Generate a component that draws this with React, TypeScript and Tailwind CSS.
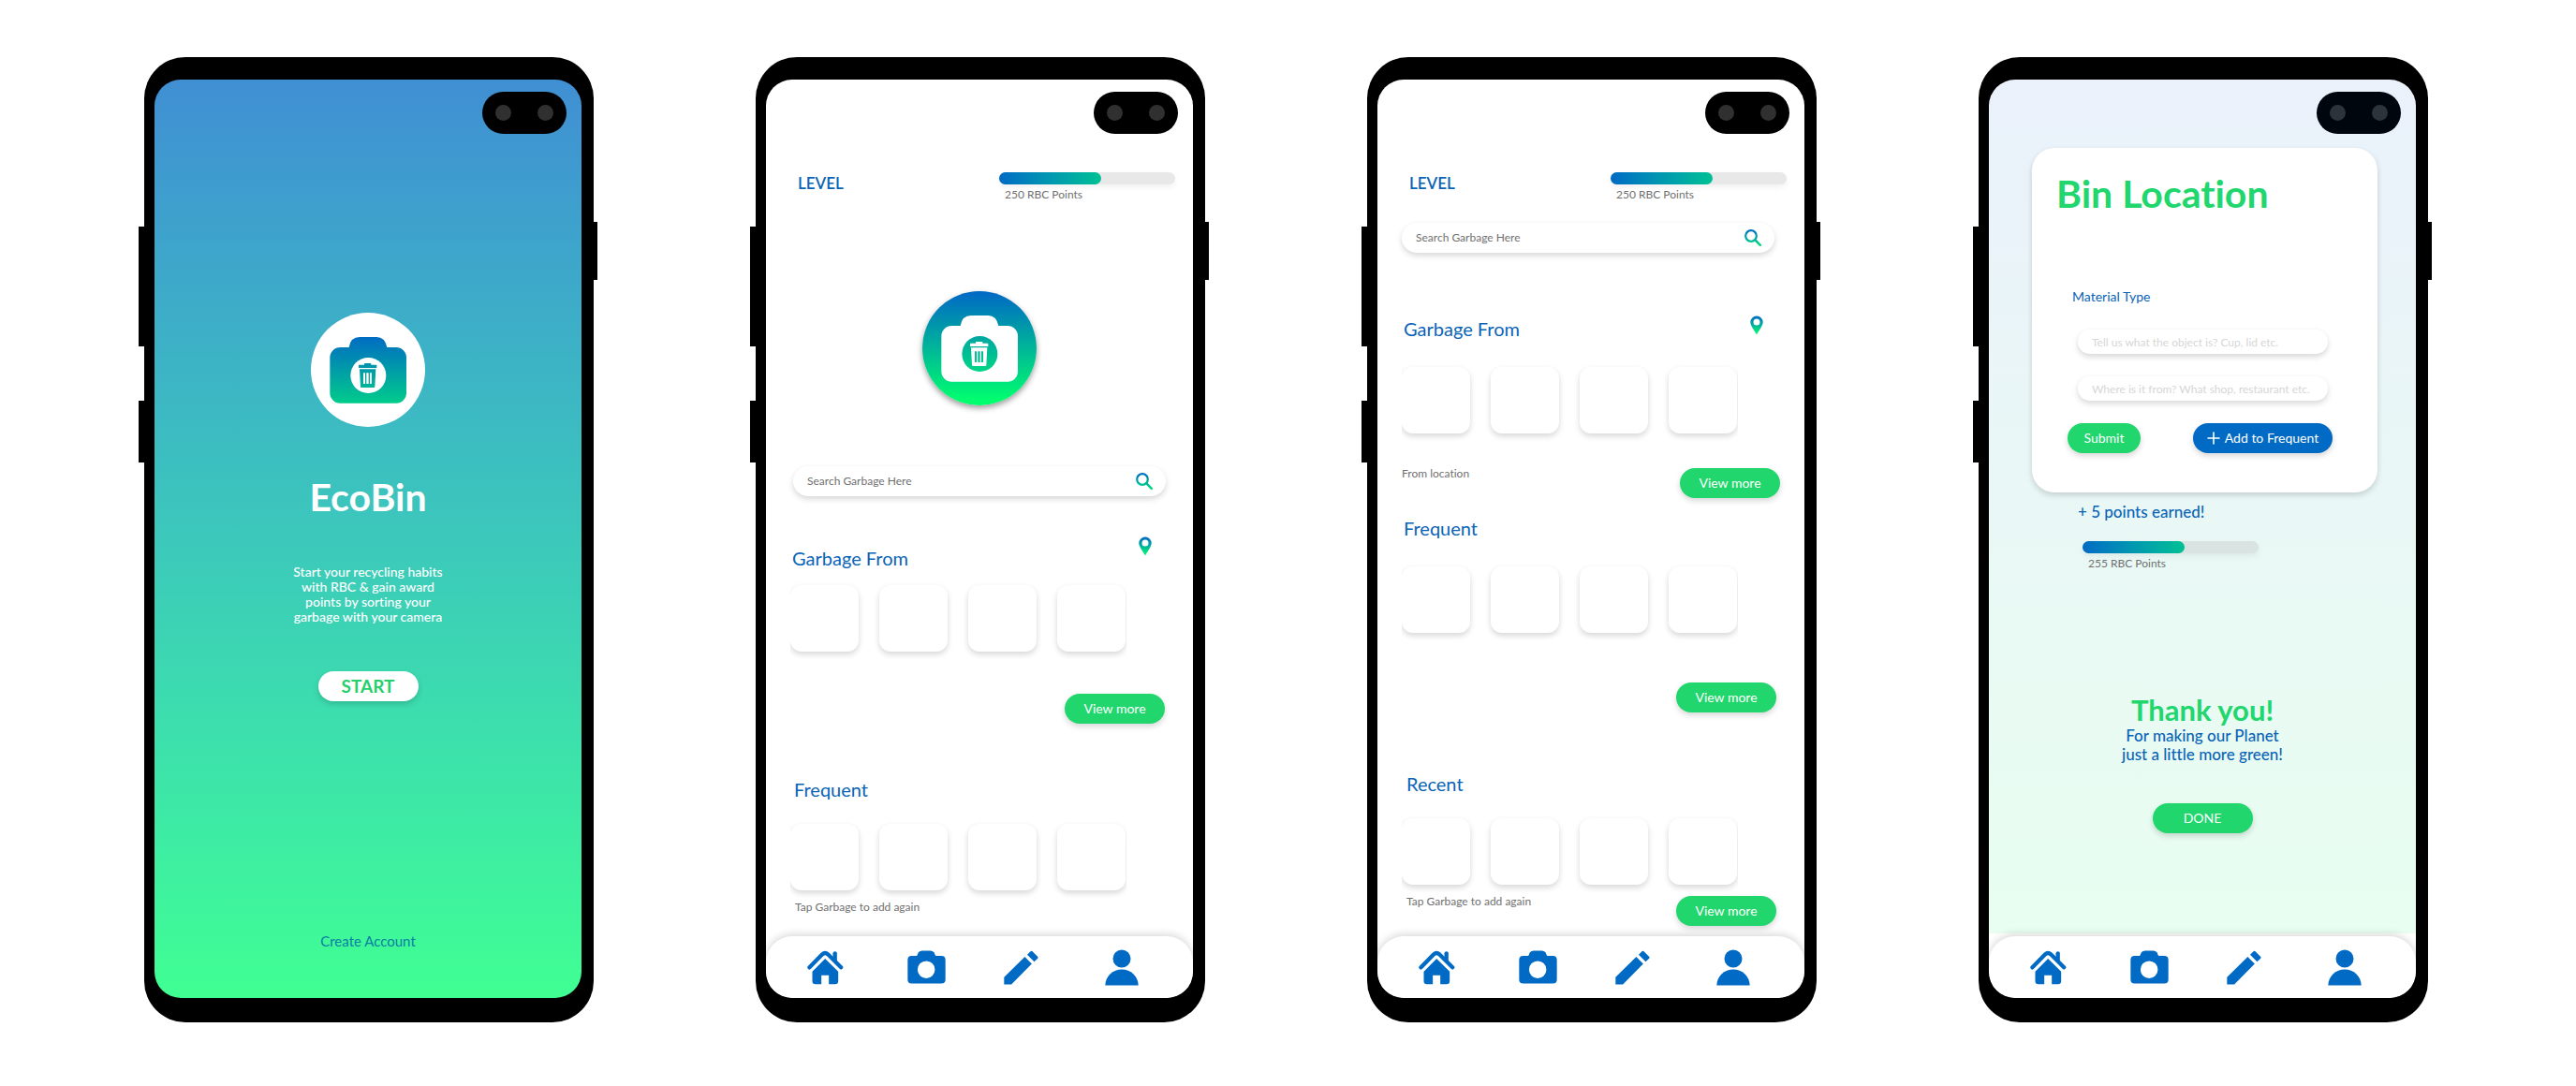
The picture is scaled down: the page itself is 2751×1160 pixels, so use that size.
import { useId } from "react";
import type { ReactNode } from "react";

const PILL_SHADOW = "shadow-[0_3px_6px_rgba(0,0,0,0.16)]";

/* ---------- Icons ---------- */

function BlueGreen({ id, y1, y2 }: { id: string; y1: number; y2: number }) {
  return (
    <defs>
      <linearGradient id={id} gradientUnits="userSpaceOnUse" x1="0" y1={y1} x2="0" y2={y2}>
        <stop offset="0" stopColor="#006ac4" />
        <stop offset="1" stopColor="#00ff6e" />
      </linearGradient>
    </defs>
  );
}

function CameraBinLogo({ inverted = false }: { inverted?: boolean }) {
  const id = useId();
  const fill = `url(#${id})`;
  const back = inverted ? fill : "#ffffff";
  const front = inverted ? "#ffffff" : fill;
  return (
    <svg viewBox="36 42 366 366" className="block size-[122px]" aria-hidden="true">
      <BlueGreen id={id} y1={inverted ? 48 : 115} y2={inverted ? 395 : 445} />
      <circle cx="219" cy="225" r="183" fill={back} />
      <path
        d="M130 153H158Q163 120 192 120H247Q273 120 280 153H309A33 33 0 0 1 342 186V299A33 33 0 0 1 309 332H130A33 33 0 0 1 97 299V186A33 33 0 0 1 130 153Z"
        fill={front}
      />
      <circle cx="220" cy="243" r="57" fill={back} />
      <path d="M207 209V206Q207 204 209 204H227Q229 204 229 206V209H245Q247 209 247 211V219H189V211Q189 209 191 209Z" fill={front} />
      <path
        fillRule="evenodd"
        d="M192 223H244L241 279Q241 282 238 282H198Q195 282 195 279ZM204 235V270H210V235ZM214 235V270H221V235ZM225 235V270H231V235Z"
        fill={front}
      />
    </svg>
  );
}

function SearchIcon() {
  const id = useId();
  return (
    <svg viewBox="0 0 18 18" className="block size-[18px]" fill="none" aria-hidden="true">
      <BlueGreen id={id} y1={0} y2={22} />
      <circle cx="7" cy="7" r="5.8" stroke={`url(#${id})`} strokeWidth="2.2" />
      <path d="M11.2 11.2L16.8 16.8" stroke={`url(#${id})`} strokeWidth="2.6" strokeLinecap="round" />
    </svg>
  );
}

function PinIcon() {
  const id = useId();
  return (
    <svg viewBox="0 0 14 21" className="block h-[21px] w-3.5" aria-hidden="true">
      <BlueGreen id={id} y1={1} y2={20} />
      <path
        fillRule="evenodd"
        d="M7 0.5A6.7 6.7 0 0 1 13.7 7.2C13.7 11 9 16.5 7 20.5C5 16.5 0.3 11 0.3 7.2A6.7 6.7 0 0 1 7 0.5ZM7 3.6A3.5 3.5 0 1 0 7 10.6A3.5 3.5 0 1 0 7 3.6Z"
        fill={`url(#${id})`}
      />
    </svg>
  );
}

function HomeIcon() {
  return (
    <svg viewBox="36 76 116 114" className="block h-[38px] w-[39px]" fill="currentColor" aria-hidden="true">
      <path d="M43 134L84 92Q93 84 102 92L144 134" fill="none" stroke="currentColor" strokeWidth="13" strokeLinecap="round" />
      <path d="M93 106L135 147V178Q135 188 125 188H105V159H81V188H62Q52 188 52 178V147Z" />
      <path d="M118 89Q118 83 125 83Q131 83 131 89V116L118 103Z" />
    </svg>
  );
}

function CameraIcon() {
  return (
    <svg viewBox="357 76 124 108" className="block h-9 w-[41px]" fill="currentColor" aria-hidden="true">
      <path
        fillRule="evenodd"
        d="M371 94H385Q389 94 390 89Q393 77 404 77H432Q443 77 446 89Q447 94 451 94H467Q480 94 480 107V170Q480 183 467 183H371Q358 183 358 170V107Q358 94 371 94ZM418 110A28 28 0 1 0 418 166A28 28 0 1 0 418 110Z"
      />
    </svg>
  );
}

function PencilIcon() {
  return (
    <svg viewBox="36 73 114 113" className="block size-[37px]" fill="currentColor" aria-hidden="true">
      <path d="M37 161L105 94L128 117L61 185H37Z" />
      <path d="M113 87L123 77Q127 73 131 77L147 93Q151 97 146 101L136 110Z" />
    </svg>
  );
}

function PersonIcon() {
  return (
    <svg viewBox="359 71 110 118" className="block h-[39px] w-9" fill="currentColor" aria-hidden="true">
      <circle cx="414" cy="101" r="29" />
      <path d="M360 188A54 52 0 0 1 468 188Z" />
    </svg>
  );
}

/* ---------- Phone shell ---------- */

function Phone({
  screen,
  pill = "bg-black",
  lens = "bg-[#303030]",
  children,
}: {
  screen: string;
  pill?: string;
  lens?: string;
  children: ReactNode;
}) {
  return (
    <section className="relative w-[480px] shrink-0 rounded-[44px] bg-black pt-6 pr-[13px] pb-[26px] pl-[11px]">
      <span className="absolute top-[181px] -left-1.5 h-32 w-3 bg-black" />
      <span className="absolute top-[367px] -left-1.5 h-[66px] w-3 bg-black" />
      <span className="absolute top-44 -right-1 h-[62px] w-3 bg-black" />
      <div className={`relative flex min-h-[981px] flex-col overflow-hidden rounded-[28px] ${screen}`}>
        <div className={`absolute top-[13px] right-4 flex h-[45px] w-[90px] items-center justify-between rounded-full px-3.5 ${pill}`}>
          <span className={`size-[17px] rounded-full ${lens}`} />
          <span className={`size-[17px] rounded-full ${lens}`} />
        </div>
        {children}
      </div>
    </section>
  );
}

function NavBar() {
  return (
    <nav className="mt-auto flex h-[66px] items-center rounded-[28px] bg-white pl-11 text-[#006ac4] shadow-[0_-2px_8px_rgba(0,0,0,0.16)]">
      <button type="button" aria-label="Home">
        <HomeIcon />
      </button>
      <button type="button" aria-label="Camera" className="ml-[68px]">
        <CameraIcon />
      </button>
      <button type="button" aria-label="Edit" className="ml-[62px]">
        <PencilIcon />
      </button>
      <button type="button" aria-label="Profile" className="ml-[71px]">
        <PersonIcon />
      </button>
    </nav>
  );
}

/* ---------- Shared pieces ---------- */

function Points({ label, track = "bg-[#e8e8e8]" }: { label: string; track?: string }) {
  return (
    <div className="w-[188px]">
      <div
        role="progressbar"
        aria-label={label}
        aria-valuenow={58}
        aria-valuemin={0}
        aria-valuemax={100}
        className={`h-[13px] rounded-full shadow-[0_3px_6px_rgba(0,0,0,0.06)] ${track}`}
      >
        <div className="h-full w-[58%] rounded-full bg-linear-to-r from-[#006ac4] to-[#00c093]" />
      </div>
      <p className="mt-[3px] pl-1.5 text-xs text-[#707070]">{label}</p>
    </div>
  );
}

function Header() {
  return (
    <header className="flex items-start justify-between pt-[99px] pr-[19px] pl-[34px]">
      <h2 className="text-[17px] leading-6 font-semibold text-[#0a64b6]">LEVEL</h2>
      <Points label="250 RBC Points" />
    </header>
  );
}

function Search() {
  return (
    <label className={`flex h-8 w-[398px] items-center rounded-full bg-white pr-3.5 pl-[15px] ${PILL_SHADOW}`}>
      <input
        type="search"
        aria-label="Search garbage"
        placeholder="Search Garbage Here"
        className="min-w-0 flex-1 bg-transparent text-xs text-[#707070] outline-none placeholder:text-[#707070]"
      />
      <SearchIcon />
    </label>
  );
}

function Heading({ children }: { children: ReactNode }) {
  return <h3 className="text-xl leading-7 text-[#0a64b6]">{children}</h3>;
}

function Cards() {
  return (
    <ul className="ml-[26px] flex w-[359px] gap-[22px] overflow-x-clip">
      {[0, 1, 2, 3].map((n) => (
        <li key={n} className={`h-[71px] w-[73px] shrink-0 rounded-xl bg-white ${PILL_SHADOW}`} />
      ))}
    </ul>
  );
}

function PillButton({ children, className }: { children: ReactNode; className: string }) {
  return (
    <button type="button" className={`flex h-8 items-center justify-center rounded-full text-sm ${PILL_SHADOW} ${className}`}>
      {children}
    </button>
  );
}

function ViewMore() {
  return <PillButton className="w-[107px] bg-[#20d66d] text-white">View more</PillButton>;
}

/* ---------- Screens ---------- */

function WelcomeScreen() {
  return (
    <Phone screen="items-center bg-linear-to-b from-[#408fd3] to-[#40ff92]">
      <div className="mt-[249px]">
        <CameraBinLogo />
      </div>
      <h1 className="mt-[51px] text-[41px] leading-[48px] font-bold text-white">EcoBin</h1>
      <p className="mt-12 w-44 text-center text-sm leading-4 font-medium text-white">
        Start your recycling habits with RBC &amp; gain award points by sorting your garbage with your camera
      </p>
      <PillButton className="mt-[50px] w-[107px] bg-white text-[#25cf6c]">
        <span className="text-[19px] font-bold">START</span>
      </PillButton>
      <a href="#create-account" className="mt-auto mb-[49px] text-[15px] leading-6 text-[#0a7fa3]">
        Create Account
      </a>
    </Phone>
  );
}

function HomeScreen() {
  return (
    <Phone screen="bg-white">
      <Header />
      <button type="button" aria-label="Scan garbage" className="mt-[95px] self-center rounded-full shadow-[0_3px_6px_rgba(0,0,0,0.4)]">
        <CameraBinLogo inverted />
      </button>
      <div className="mt-[65px] pl-[29px]">
        <Search />
      </div>
      <div className="mt-[43px] flex h-[37px] justify-between pr-[44px] pl-7">
        <div className="self-end">
          <Heading>Garbage From</Heading>
        </div>
        <PinIcon />
      </div>
      <div className="mt-[15px]">
        <Cards />
      </div>
      <div className="mt-[45px] flex justify-end pr-[30px]">
        <ViewMore />
      </div>
      <div className="mt-14 pl-[30px]">
        <Heading>Frequent</Heading>
      </div>
      <div className="mt-[23px]">
        <Cards />
      </div>
      <p className="mt-2.5 pl-[31px] text-xs text-[#707070]">Tap Garbage to add again</p>
      <NavBar />
    </Phone>
  );
}

function SearchScreen() {
  return (
    <Phone screen="bg-white">
      <Header />
      <div className="mt-[22px] pl-[26px]">
        <Search />
      </div>
      <div className="mt-[67px] flex items-start justify-between pr-[44px] pl-7">
        <Heading>Garbage From</Heading>
        <PinIcon />
      </div>
      <div className="mt-[27px]">
        <Cards />
      </div>
      <div className="mt-[37px] flex items-start justify-between pr-[26px] pl-[26px]">
        <p className="text-xs leading-3 text-[#707070]">From location</p>
        <ViewMore />
      </div>
      <div className="mt-[18px] pl-7">
        <Heading>Frequent</Heading>
      </div>
      <div className="mt-[27px]">
        <Cards />
      </div>
      <div className="mt-[53px] flex justify-end pr-[30px]">
        <ViewMore />
      </div>
      <div className="mt-[62px] pl-[31px]">
        <Heading>Recent</Heading>
      </div>
      <div className="mt-[23px]">
        <Cards />
      </div>
      <div className="mt-3 flex items-start justify-between pr-[30px] pl-[31px]">
        <p className="text-xs leading-3 text-[#707070]">Tap Garbage to add again</p>
        <ViewMore />
      </div>
      <NavBar />
    </Phone>
  );
}

function BinField({ label, placeholder }: { label: string; placeholder: string }) {
  return (
    <input
      type="text"
      aria-label={label}
      placeholder={placeholder}
      className={`h-[26px] w-[267px] rounded-full bg-white px-[15px] text-xs outline-none placeholder:text-[#d6d6d6] ${PILL_SHADOW}`}
    />
  );
}

function BinLocationScreen() {
  return (
    <Phone
      screen="bg-[linear-gradient(to_bottom,#eaf1fb_0%,#e8fef0_93%,#ffffff_93%)]"
      pill="bg-[#00060d]"
      lens="bg-[#2d333a]"
    >
      <form className={`mt-[73px] mr-[41px] ml-[46px] flex flex-col rounded-3xl bg-white pt-[25px] pb-[42px] ${PILL_SHADOW}`}>
        <h1 className="pl-[26px] text-[41px] leading-[48px] font-bold text-[#20d66d]">Bin Location</h1>
        <h2 className="mt-[76px] pl-[43px] text-sm text-[#0a64b6]">Material Type</h2>
        <div className="mt-[25px] flex flex-col gap-6 pl-[49px]">
          <BinField label="Object" placeholder="Tell us what the object is? Cup, lid etc." />
          <BinField label="Origin" placeholder="Where is it from? What shop, restaurant etc." />
        </div>
        <div className="mt-6 flex justify-between pr-12 pl-[38px]">
          <PillButton className="w-[78px] bg-[#20d66d] text-white">Submit</PillButton>
          <PillButton className="w-[149px] gap-[5px] bg-[#006ac4] text-white">
            <svg viewBox="0 0 14 14" className="size-3.5" stroke="currentColor" strokeWidth="1.6" strokeLinecap="round" aria-hidden="true">
              <path d="M7 1V13M1 7H13" />
            </svg>
            Add to Frequent
          </PillButton>
        </div>
      </form>
      <p className="mt-[9px] pl-[95px] text-[17px] leading-6 font-medium text-[#0a64b6]">+ 5 points earned!</p>
      <div className="mt-[19px] pl-[100px]">
        <Points label="255 RBC Points" track="bg-[#d9e3e1]" />
      </div>
      <div className="mt-[130px] flex flex-col items-center text-center">
        <h2 className="text-[31px] leading-9 font-bold text-[#20d66d]">Thank you!</h2>
        <p className="w-48 text-[17px] leading-5 font-medium text-[#0a64b6]">For making our Planet just a little more green!</p>
        <PillButton className="mt-[42px] w-[107px] bg-[#20d66d] text-white">DONE</PillButton>
      </div>
      <NavBar />
    </Phone>
  );
}

export default function App() {
  return (
    <main className="flex min-h-screen flex-wrap items-start justify-center gap-x-[173px] gap-y-16 bg-white pt-[61px] pr-1 pb-[67px] font-['Lato','Open_Sans',sans-serif] [font-variant-ligatures:none]">
      <WelcomeScreen />
      <HomeScreen />
      <SearchScreen />
      <BinLocationScreen />
    </main>
  );
}
